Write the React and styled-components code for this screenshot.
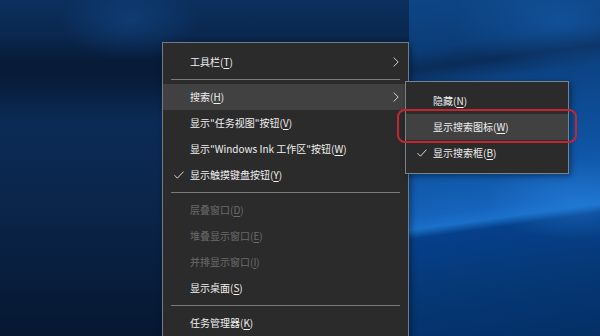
import React from 'react';
import styled, { createGlobalStyle } from 'styled-components';

const GlobalStyle = createGlobalStyle`
  html, body {
    margin: 0;
    padding: 0;
    overflow: hidden;
  }
  body {
    font-family: 'Noto Sans CJK SC', 'Noto Sans', sans-serif;
  }
`;

const mainItems = [
  { label: '工具栏', key: 'T', arrow: true },
  { sep: true },
  { label: '搜索', key: 'H', arrow: true, active: true },
  { label: '显示"任务视图"按钮', key: 'V' },
  { label: '显示"Windows Ink 工作区"按钮', key: 'W' },
  { label: '显示触摸键盘按钮', key: 'Y', checked: true },
  { sep: true },
  { label: '层叠窗口', key: 'D', disabled: true },
  { label: '堆叠显示窗口', key: 'E', disabled: true },
  { label: '并排显示窗口', key: 'I', disabled: true },
  { label: '显示桌面', key: 'S' },
  { sep: true },
  { label: '任务管理器', key: 'K' },
];

const searchItems = [
  { label: '隐藏', key: 'N' },
  { label: '显示搜索图标', key: 'W', active: true },
  { label: '显示搜索框', key: 'B', checked: true },
];

const Check = () => (
  <svg width='10' height='8' viewBox='0 0 10 8'>
    <polyline points='0.5,4.2 3.4,7.2 9.5,0.6' fill='none' stroke='#d8d8d8' strokeWidth='1' />
  </svg>
);

const Chevron = () => (
  <svg width='6' height='10' viewBox='0 0 6 10'>
    <polyline points='0.6,0.5 5.2,5 0.6,9.5' fill='none' stroke='#cfcfcf' strokeWidth='1' />
  </svg>
);

const MenuList = ({ items }) =>
  items.map((item, i) =>
    item.sep ? (
      <Separator key={i} />
    ) : (
      <Item key={i} active={item.active} disabled={item.disabled}>
        <Mark>{item.checked && <Check />}</Mark>
        <Label>
          {item.label}(<u>{item.key}</u>)
        </Label>
        <Mark>{item.arrow && <Chevron />}</Mark>
      </Item>
    )
  );

const App = () => {
  return (
    <>
      <GlobalStyle />
      <Desktop>
        <Menu>
          <MenuList items={mainItems} />
          <Flyout>
            <MenuList items={searchItems} />
            <Ring />
          </Flyout>
        </Menu>
      </Desktop>
    </>
  );
};

const Desktop = styled.div`
  width: 600px;
  height: 336px;
  overflow: hidden;
  display: flex;
  align-items: flex-start;
  padding: 42px 0 0 162px;
  box-sizing: border-box;
  background:
    radial-gradient(ellipse 90px 40px at 575px 200px, rgba(40, 130, 220, 0.5), transparent),
    radial-gradient(ellipse 110px 50px at 560px 20px, rgba(25, 100, 185, 0.45), transparent),
    linear-gradient(172deg, #0d4686 0%, #0b3d78 14%, #0a2c58 19.5%, #0c4384 25%, #0e52a0 45%, #1563bb 60%, #1a70c9 63.5%, #06408a 66%, #053876 82%, #042f66 100%) 409px 0 / 191px 336px no-repeat,
    radial-gradient(ellipse 70px 40px at 130px 20px, rgba(20, 80, 150, 0.45), transparent),
    linear-gradient(180deg, #0c2f5e 0%, #0a2850 10%, #071a36 19%, #081d3c 25%, #0b2b56 36%, #0a2549 62%, #061731 100%);
`;

const Menu = styled.div`
  position: relative;
  width: 247px;
  flex-shrink: 0;
  box-sizing: border-box;
  padding: 6px 0 8px;
  background: #2b2b2b;
  border: 1px solid #737b86;
  box-shadow: 2px 2px 6px rgba(0, 0, 0, 0.4);
`;

const Flyout = styled.div`
  position: absolute;
  left: 242px;
  top: 38px;
  width: 164px;
  box-sizing: border-box;
  padding: 6px 0 7px;
  background: #2b2b2b;
  border: 1px solid #7a828c;
  box-shadow: 2px 2px 6px rgba(0, 0, 0, 0.4);
`;

const Ring = styled.div`
  position: absolute;
  left: -9px;
  top: 27px;
  width: 180px;
  height: 34px;
  box-sizing: border-box;
  border: 2px solid #c4262f;
  border-radius: 8px;
`;

const Item = styled.div`
  display: grid;
  grid-template-columns: 23px 1fr 20px;
  align-items: center;
  height: 26px;
  padding: 0 2px 0 4px;
  font-size: 10px;
  color: ${({ disabled }) => (disabled ? '#6b6b6b' : '#f0f0f0')};
  background: ${({ active }) => (active ? '#414141' : 'transparent')};
  white-space: nowrap;
  & u {
    text-underline-offset: 2px;
  }
`;

const Mark = styled.span`
  display: flex;
  align-items: center;
  justify-content: center;
`;

const Label = styled.span`
  line-height: 26px;
`;

const Separator = styled.div`
  height: 9px;
  display: flex;
  align-items: center;
  padding: 0 8px;
  &::after {
    content: '';
    flex: 1;
    height: 1px;
    background: #7a7a7a;
  }
`;

export default App;
